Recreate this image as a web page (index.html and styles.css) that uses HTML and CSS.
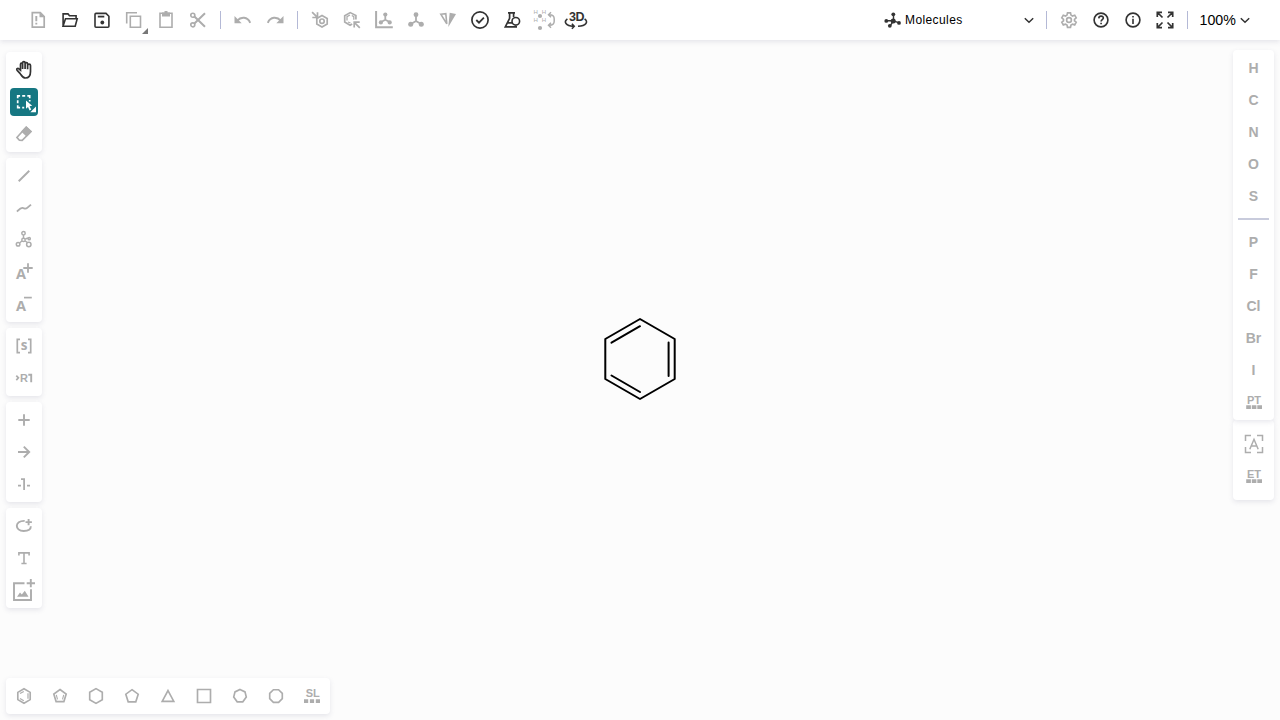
FILE: index.html
```html
<!DOCTYPE html>
<html lang="en">
<head>
<meta charset="utf-8">
<title>Molecule editor</title>
<link rel="stylesheet" href="styles.css">
</head>
<body>
<div class="app">
<header class="topbar">
  <button class="tool off"><svg viewBox="0 0 24 24"><path d="M6.3 4.6h8l3.9 3.9v10.7H6.3z" stroke-width="1.7"/><path class="solid" d="M13.5 4l5.3 5.3h-5.3z"/><path d="M10.3 8v5.3M10.3 14.8v1.7" stroke-width="1.9"/></svg></button>
  <button class="tool"><svg viewBox="0 0 24 24"><path d="M5.1 18V5.9h4.9l1.5 1.8h6.6v2.6M5 18.3L7.5 10.7h11.7l-2 7.6z" stroke-width="1.6"/></svg></button>
  <button class="tool"><svg viewBox="0 0 24 24"><path d="M6 5.4h10l2.9 2.9v9.9q0 1-1 1H6q-1 0-1-1V6.4q0-1 1-1z" stroke-width="1.6"/><path d="M7.8 8.6h6.5" stroke-width="1.8"/><circle class="solid" cx="12.3" cy="14.5" r="1.9"/></svg></button>
  <button class="tool off"><svg viewBox="0 0 24 24"><path d="M4.7 15.5V4.7H15M8.3 8.3h10.2v11H8.3z" stroke-width="1.6"/></svg><i class="corner"></i></button>
  <button class="tool off"><svg viewBox="0 0 24 24"><path d="M6 5.2h12v14.1H6z" stroke-width="1.6"/><path class="solid" d="M8 4.5h2.5V3h3v1.5H16v4H8z"/></svg></button>
  <button class="tool off"><svg viewBox="0 0 24 24"><circle cx="6.8" cy="7.2" r="2"/><circle cx="6.8" cy="16.8" r="2"/><path d="M8.4 8.5L19 18.8M8.4 15.5L19 5.2" stroke-width="2"/></svg></button>
  <span class="rule"></span>
  <button class="tool off"><svg viewBox="0 0 24 24"><path d="M6.2 12.7C10 8.5 16.5 8.6 19.2 14.8" stroke-width="2"/><path class="solid" d="M3.5 8v7.2h7.2z"/></svg></button>
  <button class="tool off"><svg viewBox="0 0 24 24"><path d="M17.8 12.7C14 8.5 7.5 8.6 4.8 14.8" stroke-width="2"/><path class="solid" d="M20.5 8v7.2h-7.2z"/></svg></button>
  <span class="rule"></span>
  <button class="tool off"><svg viewBox="0 0 24 24"><path d="M14 7.5l5.2 2.9v5.7L14 19l-5.2-2.9v-5.7z" stroke-width="1.7"/><circle cx="14" cy="13.2" r="2.2" stroke-width="1.7"/><path d="M4.1 4.1l4.8 4.8M9.5 4.3v5.2H4.3" stroke-width="1.7"/></svg></button>
  <button class="tool off"><svg viewBox="0 0 24 24"><path d="M15.9 11.5V7.6L10.2 4.6 4.7 7.8v6.3l5.4 3.1 2.1-1.1" stroke-width="1.7"/><path d="M10 7l-3 1.7v3.7M8 14l2.5 1M11.8 7.5l2 1.2v3" stroke-width="1.3"/><path d="M19.8 19.8l-5-5M14.2 19.5v-5.3h5.5" stroke-width="1.7"/></svg></button>
  <button class="tool off"><svg viewBox="0 0 24 24"><path d="M4.1 3v16.2h16.7" stroke-width="2"/><path d="M13.3 6.5v5.3L9.2 14m4.1-2.2l4.3 2.2" stroke-width="1.8"/><g class="solid"><circle cx="13.3" cy="6.5" r="2.1"/><circle cx="8.9" cy="14.4" r="2.1"/><circle cx="17.7" cy="14.4" r="2.1"/></g></svg></button>
  <button class="tool off"><svg viewBox="0 0 24 24"><path d="M12 7v6l-5 3m5-3l5 3" stroke-width="1.8"/><g class="solid"><circle cx="12" cy="6.7" r="2.4"/><circle cx="6.7" cy="16.2" r="2.5"/><circle cx="17.3" cy="16.2" r="2.5"/></g></svg></button>
  <button class="tool off"><svg viewBox="0 0 24 24"><path d="M4.8 6.2l5-.6 1 10.2z" stroke-width="1.6"/><path class="solid" d="M13.7 4.7l6.3 1.3-7.7 13z"/></svg></button>
  <button class="tool"><svg viewBox="0 0 24 24"><circle cx="12" cy="12" r="8.1" stroke-width="1.7"/><path d="M8.3 12l2.7 2.7 4.9-5" stroke-width="1.8"/></svg></button>
  <button class="tool"><svg viewBox="0 0 24 24"><path d="M8 4.8h7M9.6 5v5.3L5.3 18.9H17M13.6 5v4" stroke-width="1.7"/><circle cx="15.8" cy="13.3" r="3.8" stroke-width="1.6"/><path d="M8 14.9h4.5" stroke-width="1.7"/></svg></button>
  <button class="tool off"><svg viewBox="0 0 24 24"><g class="tiny"><text x="1.4" y="6.2">H</text><text x="9.8" y="6.2">H</text><text x="1.4" y="14.2">H</text><text x="9.8" y="14.2">H</text></g><circle class="solid" cx="8" cy="8" r="2.1"/><circle class="solid" cx="8" cy="20" r="2.1"/><path d="M17.5 6.7q4.7 0 4.7 4v2.6q0 4-4.7 4M19 4.2l-2.5 2.5L19 9.2M19 14.8l-2.5 2.5 2.5 2.5" stroke-width="1.5"/></svg></button>
  <button class="tool"><svg viewBox="0 0 24 24"><text class="glyph three" x="12.6" y="12.7" text-anchor="middle">3D</text><path d="M3.4 10.8C-.6 13.8 1.6 17.8 9.5 18.4M7.9 15.8l2.3 2.5-2.3 2.5M20.6 10.8c4 3 1.8 6.8-6.6 7.5" stroke-width="1.6"/></svg></button>
  <div class="mode">
    <svg class="mol" viewBox="0 0 20 20"><path d="M10.5 10.8V4M10.5 10.8L3.5 10.8M10.5 10.8l-3.4 5M10.5 10.8l5.7 2" stroke-width="1.4"/><g class="solid"><circle cx="10.2" cy="10.9" r="2.5"/><circle cx="10.3" cy="4.3" r="1.9"/><circle cx="3.3" cy="10.9" r="1.9"/><circle cx="6.8" cy="15.8" r="1.9"/><circle cx="16" cy="12.9" r="1.9"/></g></svg>
    <span>Molecules</span>
    <svg class="chev" viewBox="0 0 12 12"><path d="M1.8 4.2L6 8.2l4.2-4"/></svg>
  </div>
  <span class="rule"></span>
  <button class="tool off"><svg viewBox="0 0 24 24"><path d="M10.5 4.8h3l.5 2.3 1.5.9 2.2-.8 1.5 2.7-1.7 1.4v1.5l1.7 1.4-1.5 2.7-2.2-.8-1.5.9-.5 2.3h-3l-.5-2.3-1.5-.9-2.2.8-1.5-2.7 1.7-1.4v-1.5L4.8 9.9l1.5-2.7 2.2.8 1.5-.9z"/><circle cx="12" cy="12" r="2.4"/></svg></button>
  <button class="tool"><svg viewBox="0 0 24 24"><circle cx="12" cy="12" r="6.9"/><path d="M9.8 10.4c.1-3.2 4.8-2.8 4.5-.2-.2 1.6-2.2 1.5-2.2 3.4M12.1 14.7v1.5"/></svg></button>
  <button class="tool"><svg viewBox="0 0 24 24"><circle cx="12" cy="12" r="6.9"/><path d="M12 10.8v5.3M12 7.9v1.6" stroke-width="1.6"/></svg></button>
  <button class="tool"><svg viewBox="0 0 24 24"><path d="M4.3 8.9V4.3H9M4.5 4.5l5 5M15 4.3h4.7v4.6M19.5 4.5l-5 5M4.3 15.1v4.6H9M4.5 19.5l5-5M15 19.7h4.7v-4.6M19.5 19.5l-5-5" stroke-width="1.7"/></svg></button>
  <span class="rule"></span>
  <div class="scale"><span>100%</span><svg class="chev" viewBox="0 0 12 12"><path d="M1.8 4.2L6 8.2l4.2-4"/></svg></div>
</header>
<main class="workspace">
  <nav class="left">
    <div class="panel">
      <button class="tool"><svg viewBox="0 0 24 24"><path d="M8.2 15.6l-3-3.2c-1.2-1.5.5-2.6 1.7-1.6l1.6 1.3V6.5c0-1.8 2.1-1.8 2.1 0V11 5c0-1.8 2.5-1.8 2.5 0v6-5.2c0-1.7 2.5-1.7 2.5 0v5.4-3.8c0-1.8 2.9-1.8 2.9 0v6.1c0 4.3-1.5 6.5-5.1 6.5-2.6 0-3.2-1.4-5.2-4.4z" stroke-width="1.7"/></svg></button>
      <button class="tool active"><svg viewBox="0 0 24 24"><path d="M5.7 8.2V5.8h2.4M10.2 5.8h3M15.3 5.8h2.4v2.4M17.7 10v1.5M5.7 10.2v3M5.7 15.2v2.5h2.4M10.2 17.7h2" stroke-width="1.7"/><path class="solid" d="M14 10.4l6.2 5.4-2.6.4 1.6 3.4-1.6.8-1.6-3.4-2 1.8z"/><path class="solid" d="M24 16.5v5.7h-5.7z"/></svg></button>
      <button class="tool off"><svg viewBox="0 0 24 24"><path d="M14.2 5.2l4.8 4.4-8.8 8.8-2.8-.2-2.5-2.8z" stroke-width="1.6"/><path class="solid" d="M14.2 4.3l5.7 5.3-5.2 5.2-5.6-5.4z"/></svg></button>
    </div>
    <div class="panel">
      <button class="tool off"><svg viewBox="0 0 24 24"><path d="M6.7 17.2L17.3 6.8" stroke-width="1.9"/></svg></button>
      <button class="tool off"><svg viewBox="0 0 24 24"><path d="M5 15.6c2-2 3.5-4 5.5-3.7s2.7 1.7 4.7 0L19 8.6" stroke-width="1.9"/></svg></button>
      <button class="tool off"><svg viewBox="0 0 24 24"><path d="M11.5 7v3M10 13l-2.3 1.8M13.2 13l2.2 1.5M13.4 11l2.5-1" stroke-width="1.4"/><g stroke-width="1.5"><circle cx="11.5" cy="5.2" r="1.7"/><circle cx="11.5" cy="11.9" r="1.7"/><circle cx="6.1" cy="16.3" r="1.8"/><circle cx="16.8" cy="16.5" r="2.2"/><circle cx="17.2" cy="10.7" r="1.1"/></g></svg></button>
      <button class="tool off"><svg viewBox="0 0 24 24"><text class="glyph letter" x="3.9" y="18.8">A</text><path d="M16 3.2v9.6M11.3 8h9.4" stroke-width="1.8"/></svg></button>
      <button class="tool off"><svg viewBox="0 0 24 24"><text class="glyph letter" x="3.9" y="18.8">A</text><path d="M12 5.6h7.8" stroke-width="1.7"/></svg></button>
    </div>
    <div class="panel">
      <button class="tool off"><svg viewBox="0 0 24 24"><path d="M8 5.4H5.3v13.2H8M16 5.4h2.7v13.2H16" stroke-width="1.7"/><text class="glyph ess" x="12" y="16" text-anchor="middle">s</text></svg></button>
      <button class="tool off"><svg viewBox="0 0 24 24"><path d="M4.3 9.6l2.1 2.2-2.1 2.3" stroke-width="1.7"/><text class="glyph arr" x="8" y="16.3">R</text><path d="M16.3 8.7h2.9v7.6" stroke-width="1.9"/></svg></button>
    </div>
    <div class="panel">
      <button class="tool off"><svg viewBox="0 0 24 24"><path d="M12 6.3v11.4M6.3 12h11.4" stroke-width="1.9"/></svg></button>
      <button class="tool off"><svg viewBox="0 0 24 24"><path d="M6 12h11M11.8 6.6l5.4 5.4-5.4 5.4" stroke-width="1.9"/></svg></button>
      <button class="tool off"><svg viewBox="0 0 24 24"><path d="M6 13.7h3M15 13.7h3M9 7.2h3.1v10.7" stroke-width="1.8"/></svg></button>
    </div>
    <div class="panel">
      <button class="tool off"><svg viewBox="0 0 24 24"><path d="M12.7 6.9C2.2 6.5 2.5 17 11.7 17c5 0 7.2-1.6 7.1-4.7M16.6 5v6.2M13.5 8.1h6.4" stroke-width="1.9"/></svg></button>
      <button class="tool off"><svg viewBox="0 0 24 24"><path d="M6.9 9.5V6.9h10.2v2.6M12 7v10.5M9.4 17.5h5.2" stroke-width="1.6"/></svg></button>
      <button class="tool off"><svg viewBox="0 0 24 24"><path d="M12.5 5.2H2V22h17V11.3" stroke-width="1.9"/><path class="solid" d="M5 18.7l3-4.2 1.8 2 3-3.7 3.7 5.9z"/><path d="M18.8 1v8.2M14.7 5.2H23" stroke-width="1.9"/></svg></button>
    </div>
  </nav>
  <section class="canvas">
    <svg class="benzene" viewBox="0 0 76 86"><path d="M38 3l34.7 20v40L38 83 3.3 63V23zM38 10.2L9.5 26.7M9.5 59.5L38 76M66.6 26.5v33.5"/></svg>
    <div class="panel rings">
      <button class="tool off"><svg viewBox="0 0 24 24"><path d="M12 4.8l6.2 3.6v7.2L12 19.2l-6.2-3.6V8.4z"/><path d="M11.8 7.4L8 9.6M8 14.5l3.8 2.2M16 9.3v5.4" stroke-width="1.2"/></svg></button>
      <button class="tool off"><svg viewBox="0 0 24 24"><path d="M12 5.5l6.2 4.5-2.3 7.6H8.1L5.8 10z"/><path d="M8.3 10.8l1.2 4.5M15.7 10.8l-1.2 4.5" stroke-width="1.1"/></svg></button>
      <button class="tool off"><svg viewBox="0 0 24 24"><path d="M12 4.6l6.3 3.7v7.4L12 19.4l-6.3-3.7V8.3z"/></svg></button>
      <button class="tool off"><svg viewBox="0 0 24 24"><path d="M12 5.7l6.2 4.5-2.4 7.6H8.2l-2.4-7.6z"/></svg></button>
      <button class="tool off"><svg viewBox="0 0 24 24"><path d="M12 6.6l5.8 10.8H6.2z"/></svg></button>
      <button class="tool off"><svg viewBox="0 0 24 24"><path d="M5.5 5.5h13v13h-13z"/></svg></button>
      <button class="tool off"><svg viewBox="0 0 24 24"><path d="M12 5.5l5 2.4 1.3 5.2-3.5 4.7H9.2l-3.5-4.7L7 7.9z"/></svg></button>
      <button class="tool off"><svg viewBox="0 0 24 24"><path d="M9.4 5.7h5.2l3.7 3.7v5.2l-3.7 3.7H9.4l-3.7-3.7V9.4z"/></svg></button>
      <button class="tool off"><svg viewBox="0 0 24 24"><text class="glyph pair" x="12.7" y="13.2" text-anchor="middle">SL</text><path class="solid" d="M4 15.2h4.2V19H4zM9.9 15.2h4.2V19H9.9zM15.8 15.2H20V19h-4.2z"/></svg></button>
    </div>
  </section>
  <nav class="right">
    <div class="panel atoms">
      <button class="atom">H</button><button class="atom">C</button><button class="atom">N</button><button class="atom">O</button><button class="atom">S</button>
      <span class="divider"></span>
      <button class="atom">P</button><button class="atom">F</button><button class="atom">Cl</button><button class="atom">Br</button><button class="atom">I</button>
      <button class="tool off"><svg viewBox="0 0 24 24"><text class="glyph pair" x="12" y="13.6" text-anchor="middle">PT</text><path class="solid" d="M4.2 15.2h4.7V19H4.2zM9.8 15.2h4.6V19H9.8zM15.3 15.2H20V19h-4.7z"/></svg></button>
    </div>
    <div class="panel extra">
      <button class="tool off"><svg viewBox="0 0 24 24"><path d="M3.5 9V3.5H9M15 3.5h5.5V9M3.5 15v5.5H9M15 20.5h5.5V15" stroke-width="1.5"/><path d="M7.8 17.2L12 7.3l4.2 9.9M9.3 13.9h5.4" stroke-width="1.5"/></svg></button>
      <button class="tool off"><svg viewBox="0 0 24 24"><text class="glyph pair" x="12" y="13.6" text-anchor="middle">ET</text><path class="solid" d="M4.2 15.2h4.7V19H4.2zM9.8 15.2h4.6V19H9.8zM15.3 15.2H20V19h-4.7z"/></svg></button>
    </div>
  </nav>
</main>
</div>
</body>
</html>
```

FILE: styles.css
```css
* { box-sizing: border-box; }
body { margin: 0; font-family: "Liberation Sans", Arial, sans-serif; color: #000; }
button { border: 0; padding: 0; background: none; font: inherit; }
svg { display: block; overflow: visible; fill: none; stroke: currentColor; stroke-width: 1.65; }
.solid { fill: currentColor; stroke: none; }
.glyph, .tiny { fill: currentColor; stroke: none; font-family: "Liberation Sans", Arial, sans-serif; font-weight: bold; }
.three { font-size: 12.5px; letter-spacing: -0.5px; }
.tiny { font-size: 6px; font-weight: normal; }
.letter { font-family: "Open Sans", sans-serif; font-size: 14.5px; }
.ess { font-family: "Open Sans", sans-serif; font-size: 13.5px; }
.arr { font-size: 11px; }
.pair { font-size: 11px; }

.app { width: 1280px; height: 720px; display: flex; flex-direction: column; background: #fcfcfc; overflow: hidden; }
.topbar { height: 40px; flex: none; display: flex; align-items: center; padding-left: 22px; background: #fff; box-shadow: 0 2px 5px rgba(103, 104, 132, .15); }
.tool { width: 32px; height: 32px; flex: none; display: grid; place-items: center; position: relative; color: #333; }
.tool > svg { width: 24px; height: 24px; }
.off { color: #adadad; }
.rule { width: 1px; height: 18px; flex: none; margin: 0 6px; background: #b4b9d6; }
.corner { position: absolute; right: 2px; bottom: 2px; width: 6px; height: 6px; background: #777; clip-path: polygon(100% 0, 100% 100%, 0 100%); }

.mode { margin-left: auto; width: 157px; height: 32px; flex: none; display: flex; align-items: center; padding-right: 5px; font-size: 12px; letter-spacing: .4px; color: #000; }
.mode .mol { width: 20px; height: 20px; margin-right: 2px; color: #333; }
.chev { width: 12px; height: 12px; color: #333; stroke-width: 1.5; }
.mode .chev { margin-left: auto; }
.scale { width: 86px; flex: none; padding-left: 5.5px; display: flex; align-items: center; gap: 3px; font-size: 14.2px; }

.workspace { flex: 1; min-height: 0; display: flex; padding: 12px 6px 6px; }
.left { width: 36px; display: flex; flex-direction: column; gap: 6px; }
.panel { display: flex; flex-direction: column; align-items: center; padding: 2px; background: #fff; border-radius: 4px; box-shadow: 0 2px 5px rgba(103, 104, 132, .15); }
.active { width: 28px; height: 28px; margin: 2px 0; background: #167782; border-radius: 4px; color: #fff; }
.canvas { flex: 1; position: relative; }
.benzene { position: absolute; left: 560px; top: 264px; width: 76px; height: 86px; stroke: #000; stroke-width: 2; stroke-linejoin: round; stroke-linecap: round; }
.rings { position: absolute; left: -36px; bottom: 0; flex-direction: row; gap: 4px; }
.right { width: 41px; margin-top: -2px; display: flex; flex-direction: column; }
.atoms { position: relative; }
.atom { width: 32px; height: 32px; font-size: 14px; font-weight: bold; line-height: 32px; text-align: center; color: #adadad; }
.divider { width: 31px; height: 2px; margin: 6px 0; background: #c8cbdc; }
.extra { padding: 8px 2px; }
```
